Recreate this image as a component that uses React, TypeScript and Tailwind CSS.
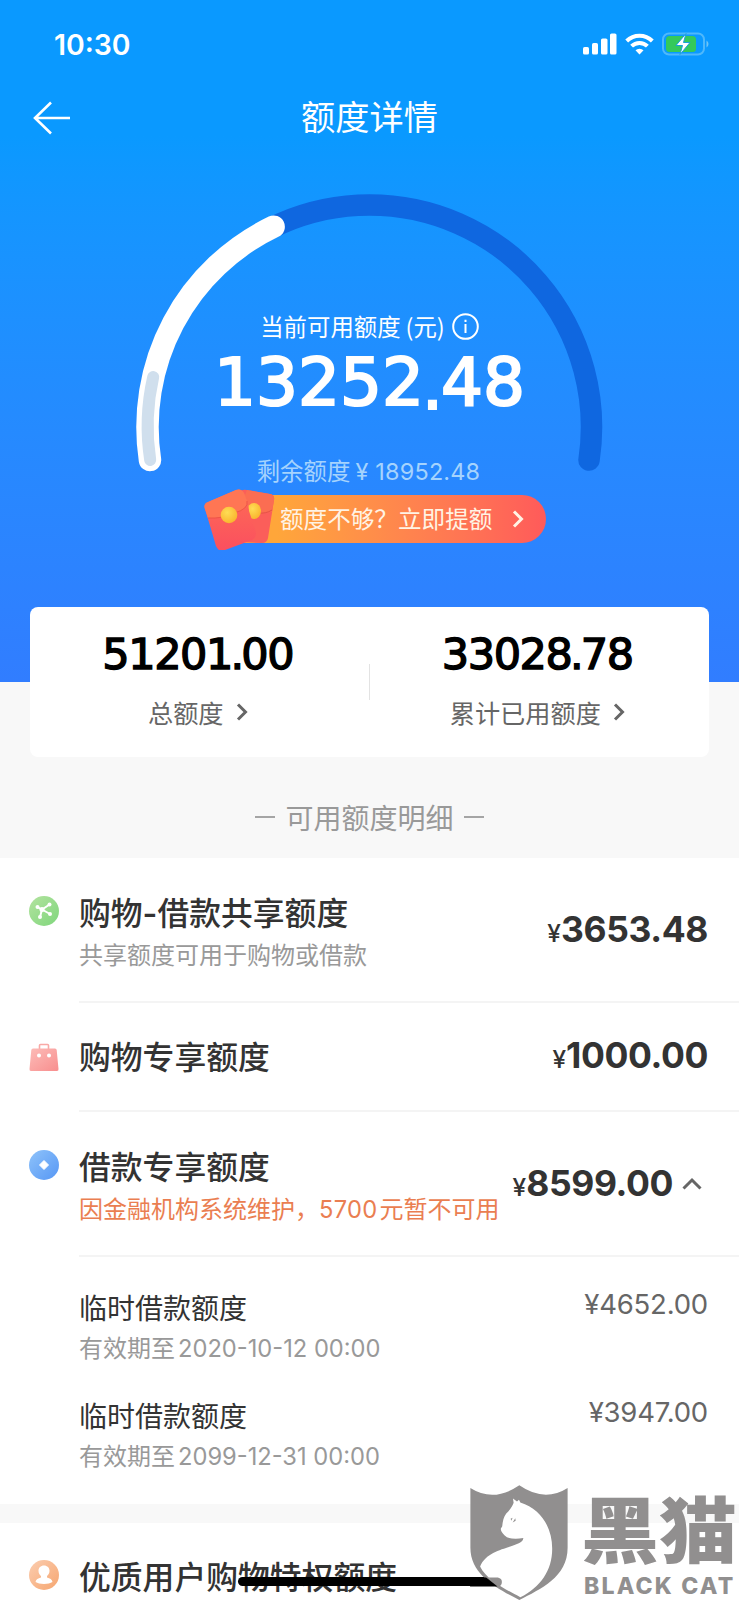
import type { ReactNode } from "react";

const Chevron = ({ className }: { className?: string }) => (
  <svg viewBox="0 0 12 18" className={className} fill="none" stroke="currentColor" strokeWidth="3">
    <path d="M2 1.5 9.5 9 2 16.5" />
  </svg>
);

const StatusBar = () => (
  <div className="flex h-[90px] items-center justify-between pl-[54px] pr-[30px]">
    <span className="font-['Inter'] text-[28.4px] font-semibold leading-none">10:30</span>
    <div className="flex items-center gap-2 pb-0.5">
      <svg width="34" height="22" viewBox="0 0 34 22" fill="currentColor">
        <rect x="0" y="14" width="6" height="7.5" rx="1.6" />
        <rect x="9" y="10" width="6" height="11.5" rx="1.6" />
        <rect x="18" y="5.5" width="6.5" height="16" rx="1.6" />
        <rect x="27" y="0.5" width="6.5" height="21" rx="1.6" />
      </svg>
      <svg width="29" height="22" viewBox="0 0 29 22" fill="none" stroke="currentColor" strokeWidth="4">
        <path d="M1.7 8a18 18 0 0 1 25.6 0" />
        <path d="M6.6 13.2a11.2 11.2 0 0 1 15.8 0" />
        <path d="M14.5 21.5l-4-4.2a5.8 5.8 0 0 1 8 0z" fill="currentColor" stroke="none" />
      </svg>
      <svg width="47" height="24" viewBox="0 0 47 24">
        <rect x="1" y="1.5" width="41" height="21" rx="6" fill="none" stroke="#4fb8fb" strokeWidth="2" />
        <rect x="4" y="4" width="30" height="16" rx="3.5" fill="#34c95b" />
        <path d="M44.5 8.5v7q2-1 2-3.5t-2-3.5z" fill="#6fc4f5" />
        <path d="M24 1.5 14 13.5h6.5L18 22.5 28 10.5h-6.5z" fill="#fff" stroke="#1b9fdc" strokeWidth="1" />
      </svg>
    </div>
  </div>
);

const Gauge = () => (
  <svg viewBox="0 0 480 300" className="absolute left-[130px] top-[180px] h-[300px] w-[480px]" fill="none" strokeLinecap="round">
    <path d="M19.970 280A222 222 0 1 1 459.030 280" stroke="#0f67e0" strokeWidth="21.500" />
    <path d="M19.970 280A222 222 0 0 1 143.600 46.700" stroke="#fff" strokeWidth="22.500" />
    <path d="M20.200 280A222 222 0 0 1 23.200 197" stroke="#d0dfed" strokeWidth="12" />
  </svg>
);

const RedPackets = () => (
  <svg viewBox="0 0 72 62" className="absolute -left-[7px] -top-[7px] h-[62px] w-[72px]">
    <defs>
      <linearGradient id="packet" x1="0" y1="0" x2="0" y2="1">
        <stop offset="0" stopColor="#fd6d55" />
        <stop offset="1" stopColor="#fb4f5f" />
      </linearGradient>
      <radialGradient id="coin" cx=".4" cy=".35" r=".7">
        <stop offset="0" stopColor="#ffdd55" />
        <stop offset="1" stopColor="#f9b32c" />
      </radialGradient>
    </defs>
    <path d="M36 4q3-3 8-2l23 4q5 1 4 6l-6 38q-1 5-6 5l-22-1z" fill="#fb5e5a" />
    <path d="M40 12q4 13 15 14l14-2 2-12q1-5-4-6L44 2z" fill="#fb6d52" />
    <path d="M54 25q9 1 15-3" fill="none" stroke="#e64f48" strokeWidth="1" />
    <ellipse cx="51" cy="23" rx="7" ry="8" fill="url(#coin)" />
    <path d="M2 21q-2-5 3-7L33 2q5-2 8 3l3 8q2 6 2 10l6 18q3 8-3 11l-27 10q-6 3-9-4Q8 41 2 21z" fill="url(#packet)" />
    <path d="M2 21q-2-5 3-7L33 2q5-2 8 3l3 8q2 8-13 12-10 5-26 5z" fill="#ff7654" />
    <path d="M5 30q14 1 26-5 15-4 13-12" fill="none" stroke="#ee5548" strokeWidth="1" />
    <circle cx="26" cy="27" r="8.300" fill="url(#coin)" />
  </svg>
);

const ShareIcon = () => (
  <svg viewBox="0 0 30 30" className="size-[30px]">
    <defs>
      <linearGradient id="green" x1="0" y1="0" x2="1" y2="1">
        <stop offset="0" stopColor="#b3e39f" />
        <stop offset="1" stopColor="#7fd67c" />
      </linearGradient>
    </defs>
    <circle cx="15" cy="15" r="15" fill="url(#green)" />
    <path d="M8.500 11 13 13.500 20.500 8.500M13 13.500 21 18M13 13.500 11 21" stroke="#fff" strokeWidth="2" fill="none" />
    <circle cx="13" cy="13.500" r="2.500" fill="#fff" />
    <circle cx="8.500" cy="11" r="2" fill="#fff" />
    <circle cx="20.500" cy="8.500" r="2" fill="#fff" />
    <circle cx="21" cy="18" r="2" fill="#fff" />
    <circle cx="11" cy="21" r="2" fill="#fff" />
  </svg>
);

const BagIcon = () => (
  <svg viewBox="0 0 30 30" className="mt-0.5 size-[30px]">
    <defs>
      <linearGradient id="pink" x1="0" y1="0" x2="1" y2="1">
        <stop offset="0" stopColor="#fcbcb8" />
        <stop offset="1" stopColor="#f88e8e" />
      </linearGradient>
    </defs>
    <path d="M10.500 7V3.500q0-1 1-1h7q1 0 1 1V7" fill="none" stroke="#f9a9a6" strokeWidth="1.600" />
    <path d="M4 6.500h22q1.500 0 1.700 1.500l1.800 19q.2 2-1.500 2H2q-1.700 0-1.500-2L2.300 8q.2-1.500 1.700-1.500z" fill="url(#pink)" />
    <circle cx="10" cy="13.500" r="2" fill="#fff" />
    <circle cx="20" cy="13.500" r="2" fill="#fff" />
  </svg>
);

const LoanIcon = () => (
  <svg viewBox="0 0 30 30" className="size-[30px]">
    <defs>
      <linearGradient id="blue" x1="0" y1="0" x2="1" y2="1">
        <stop offset="0" stopColor="#8fc3fa" />
        <stop offset="1" stopColor="#5697f5" />
      </linearGradient>
    </defs>
    <circle cx="15" cy="15" r="15" fill="url(#blue)" />
    <path d="M15 10.500l4.500 4.500-4.500 4.500-4.500-4.500z" fill="#fff" stroke="#fff" strokeLinejoin="round" />
  </svg>
);

const UserIcon = () => (
  <svg viewBox="0 0 30 30" className="size-[30px]">
    <defs>
      <linearGradient id="orange" x1="0" y1="0" x2="1" y2="1">
        <stop offset="0" stopColor="#fbcdb0" />
        <stop offset="1" stopColor="#f6a670" />
      </linearGradient>
    </defs>
    <circle cx="15" cy="15" r="15" fill="url(#orange)" />
    <path d="M15 5.500c3.300 0 5.500 2.300 5.500 5.300 0 2.300-1 4.200-2.500 5.200v1.500c3 .8 5 2 5.500 4.500-2 1.300-5 2-8.500 2s-6.500-.7-8.500-2c.5-2.500 2.500-3.700 5.500-4.500V16c-1.500-1-2.500-2.900-2.500-5.200 0-3 2.200-5.300 5.500-5.300z" fill="#fff" />
  </svg>
);

type StatProps = { whole: string; cents: string; label: string };

const Stat = ({ whole, cents, label }: StatProps) => (
  <div className="flex flex-1 flex-col items-center pr-1 pt-[22px]">
    <div className="font-['DejaVu_Sans'] text-[43px] leading-[50px] tracking-[-1.4px] text-black [-webkit-text-stroke:1.4px_black]">
      {whole}
      <span className="-mx-[1.5px]">.</span>
      {cents}
    </div>
    <div className="mt-[15px] flex items-center gap-3 text-[25.2px] leading-9 text-[#666]">
      {label}
      <Chevron className="h-[18px] w-3" />
    </div>
  </div>
);

type RowProps = {
  icon: ReactNode;
  title: ReactNode;
  note?: ReactNode;
  amount?: string;
  className: string;
  warning?: boolean;
  expanded?: boolean;
};

const Row = ({ icon, title, note, amount, className, warning, expanded }: RowProps) => (
  <div className={`flex pl-[29px] ${className}`}>
    <div className="mt-[5px] w-[50px] shrink-0">{icon}</div>
    <div className={`flex flex-1 pr-[31px] ${amount ? "border-b-2 border-[#f4f4f4]" : ""}`}>
      <div className="-mt-0.5 whitespace-nowrap">
        <h2 className="text-[31.8px] font-medium leading-[44px] text-[#333]">{title}</h2>
        {note && (
          <p className={`text-[24px] leading-10 ${warning ? "mt-px text-[#ea7e51]" : "-mt-0.5 text-[#999]"}`}>{note}</p>
        )}
      </div>
      {amount && (
        <div className={`ml-auto flex items-baseline self-start font-['Inter'] text-[#333] ${note ? "mt-[17px]" : "-mt-px"} ${expanded ? "mr-[6px]" : ""}`}>
          <span className="text-[24.5px] font-medium leading-[44px]">¥</span>
          <span className="text-[35.5px] font-bold leading-[44px] tracking-[-0.4px]">{amount}</span>
          {expanded && (
            <svg width="20" height="13" viewBox="0 0 20 13" className="-mt-1 ml-[9px] self-center" fill="none" stroke="#666" strokeWidth="3">
              <path d="M1.500 11.500 10 3l8.500 8.500" />
            </svg>
          )}
        </div>
      )}
    </div>
  </div>
);

const SubRow = ({ date, amount }: { date: string; amount: string }) => (
  <div className="flex h-[108px] justify-between pl-[79px] pr-[31px]">
    <div className="-mt-px">
      <h3 className="text-[28px] leading-10 text-[#333]">临时借款额度</h3>
      <p className="text-[24px] leading-10 text-[#999]">
        有效期至<span className="ml-[3px] font-['Inter'] text-[23.700px]">{date}</span>
      </p>
    </div>
    <span className="-mt-1 font-['Inter'] text-[27.5px] leading-10 tracking-[-0.2px] text-[#666]">¥{amount}</span>
  </div>
);

const Watermark = () => (
  <div className="absolute left-[470px] top-[1485px] flex text-[#918f8f]">
    <svg viewBox="90 75 292 343" className="h-[115px] w-[98px]">
      <path d="M91 84Q160 128 237 76 312 128 381 84V262C381 350 300 385 237 418 175 385 91 345 91 262z" fill="currentColor" />
      <path d="M218 115l12 9 6-5 4 8C300 145 335 200 335 265 335 330 300 380 240 410 200 388 140 360 120 318 140 270 200 265 228 252 245 245 248 240 249 233 230 236 215 236 200 231 188 222 180 212 182 205L186 198C187 185 190 170 198 160 210 150 218 135 220 128z" fill="#fff" />
      <path d="M211 176l6-3-4 9zM217 187l8-13 1 8z" fill="currentColor" />
      <path d="M145 351h28q12 3 12 13 0 12-12 14z" fill="currentColor" />
      <path d="M90 351h48l34 27H90z" fill="#000" />
    </svg>
    <div className="ml-[13px] w-[156px]">
      <div className="h-[87px] origin-top scale-y-92 text-[78px] font-black leading-[89px]">黑猫</div>
      <div className="ml-[3px] mt-0.5 whitespace-nowrap font-['Inter'] text-[23px] font-extrabold leading-6 tracking-[2.2px]">BLACK CAT</div>
    </div>
  </div>
);

export default function App() {
  return (
    <div className="relative h-[1600px] w-[739px] overflow-hidden bg-white font-['Noto_Sans_CJK_SC',sans-serif]">
      <header className="relative h-[682px] bg-linear-to-b from-[#0a99ff] from-20% to-[#317dff] text-white">
        <StatusBar />
        <div className="relative flex h-[54px] items-center justify-center">
          <svg width="38" height="34" viewBox="0 0 38 34" className="absolute left-[33px] top-[11px]" fill="none" stroke="currentColor" strokeWidth="2.600">
            <path d="M37 17H2M18 1.500 2 17l16 15.500" />
          </svg>
          <h1 className="-mt-1 text-[34.2px] leading-none">额度详情</h1>
        </div>
        <Gauge />
        <div className="relative flex flex-col items-center pt-[164px]">
          <div className="flex items-center text-[23.4px] leading-9">
            当前可用额度<span className="ml-[5px]">(元)</span>
            <svg width="27" height="27" viewBox="0 0 27 27" className="ml-[7px]" fill="none" stroke="currentColor" strokeWidth="2">
              <circle cx="13.500" cy="13.500" r="12.300" />
              <path d="M13.500 11v9M13.500 6.800v2.200" />
            </svg>
          </div>
          <div className="mt-1 font-['DejaVu_Sans'] text-[66px] leading-[70px] [-webkit-text-stroke:2.2px_white]">
            13252<span className="relative top-1 -mx-0.5">.</span>48
          </div>
          <div className="-ml-0.5 mt-[34px] text-[23.4px] leading-9 text-[#a5d3fd]">
            剩余额度 <span className="font-['Inter'] tracking-[0.2px]">¥ 18952.48</span>
          </div>
          <div className="relative ml-[17px] mt-[5px] flex h-12 w-[336px] items-center rounded-full bg-linear-to-r from-[#ffa63a] from-20% to-[#ff5a5a] pl-[70px] text-[23.6px] text-[#fff3e4]">
            <RedPackets />
            额度不够？立即提额
            <Chevron className="ml-5 h-[18px] w-3" />
          </div>
        </div>
      </header>

      <section className="relative flex h-[176px] flex-col bg-[#f8f8f8]">
        <div className="mx-[30px] -mt-[75px] flex h-[150px] shrink-0 rounded-lg bg-white">
          <Stat whole="51201" cents="00" label="总额度" />
          <div className="-ml-px mt-[57px] h-9 w-px bg-[#e3e3e3]" />
          <Stat whole="33028" cents="78" label="累计已用额度" />
        </div>
        <div className="mt-[39px] flex items-center justify-center gap-[10px] text-[28px] leading-[42px] text-[#999]">
          <span className="h-0.5 w-5 bg-[#a5a5a5]" />
          可用额度明细
          <span className="h-0.5 w-5 bg-[#a5a5a5]" />
        </div>
      </section>

      <main>
        <Row
          icon={<ShareIcon />}
          title={<>购物<span className="font-['Inter'] font-semibold">-</span>借款共享额度</>}
          note="共享额度可用于购物或借款"
          amount="3653.48"
          className="h-[145px] pt-[33px]"
        />
        <Row icon={<BagIcon />} title="购物专享额度" amount="1000.00" className="h-[109px] pt-8" />
        <Row
          icon={<LoanIcon />}
          title="借款专享额度"
          note={<>因金融机构系统维护，<span className="mr-0.5 font-['Inter'] text-[23.7px] tracking-[0.3px]">5700</span>元暂不可用</>}
          amount="8599.00"
          className="h-[145px] pt-[33px]"
          warning
          expanded
        />
        <div className="h-[247px] pt-[31px]">
          <SubRow date="2020-10-12 00:00" amount="4652.00" />
          <SubRow date="2099-12-31 00:00" amount="3947.00" />
        </div>
        <div className="h-[19px] bg-[#f8f8f8]" />
        <Row icon={<UserIcon />} title="优质用户购物特权额度" className="h-[77px] pt-8" />
      </main>

      <div className="absolute left-[238px] top-[1577px] h-[9px] w-[250px] rounded-l-full bg-black" />
      <Watermark />
    </div>
  );
}
